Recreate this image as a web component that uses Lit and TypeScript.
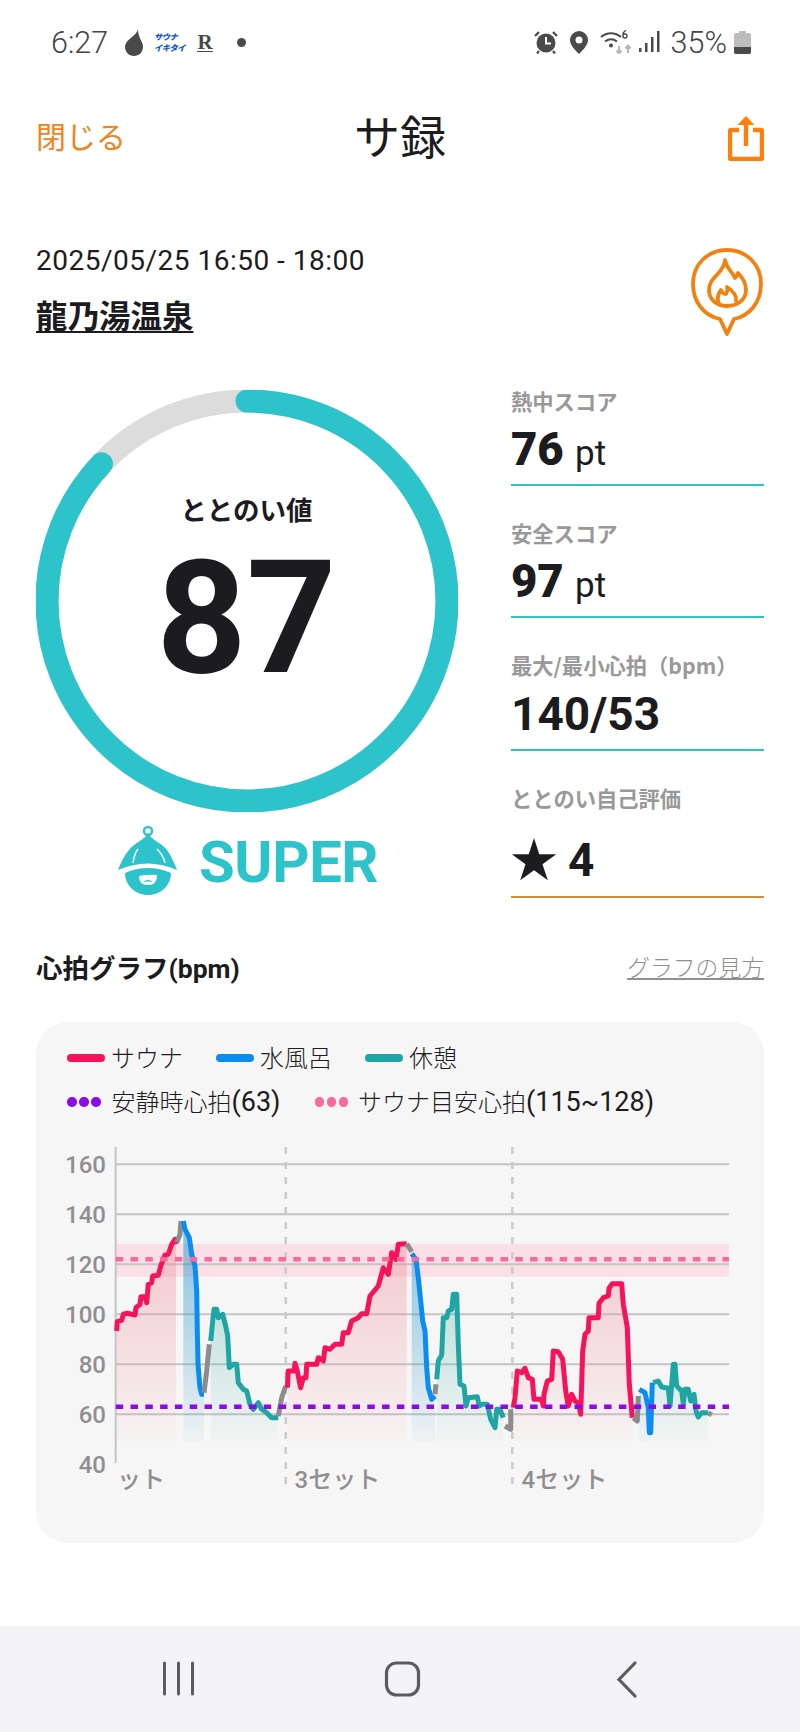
import { LitElement, html, css, svg } from "lit";
import { customElement } from "lit/decorators.js";

type P = [number, number];
const z5 = (a: P[]): P[] => a.map(([x, y]) => [40 + x / 3, 1130 + y / 3]);
const z6 = (a: P[]): P[] => a.map(([x, y]) => [400 + x / 3, 1130 + y / 3]);
const RED = "#f5135c", BLUE = "#0b8cf0", TEAL = "#1fa5a3", GRAY = "#8c8c8c";

const segs: { c: string; fill?: string; p: P[] }[] = [
  { c: RED, fill: "fr", p: z5([[230,600],[232,572],[245,568],[250,550],[262,547],[285,552],[288,530],[300,520],[303,497],[315,497],[320,515],[325,460],[335,455],[338,435],[355,433],[362,405],[375,372],[385,370],[395,340],[405,325],[408,340]]) },
  { c: GRAY, p: z5([[410,335],[420,310],[423,270]]) },
  { c: BLUE, fill: "fb", p: z5([[430,270],[435,295],[448,320],[455,370],[465,405],[470,480],[472,600],[474,700],[480,770],[485,790],[492,790]]) },
  { c: GRAY, p: z5([[492,785],[500,720],[508,640]]) },
  { c: TEAL, fill: "ft", p: z5([[512,630],[518,570],[522,535],[530,535],[535,560],[548,550],[558,590],[563,615],[568,710],[580,700],[590,700],[595,755],[610,775],[620,780],[630,820],[640,835],[655,815],[665,835],[680,845],[695,860],[715,860]]) },
  { c: GRAY, p: z5([[715,855],[725,800],[737,765]]) },
  { c: RED, fill: "fr", p: z5([[742,770],[745,720],[762,720],[765,697],[772,720],[782,770],[790,740],[798,740],[800,700],[830,700],[835,680],[850,690],[855,650],[870,655],[885,640],[905,640],[910,605],[925,605],[935,570],[955,560],[965,548],[980,548],[990,495],[1015,465],[1030,410],[1045,430],[1055,365],[1068,385],[1075,340],[1100,338]]) },
  { c: GRAY, p: z6([[20,338],[35,362]]) },
  { c: BLUE, fill: "fb", p: z6([[35,368],[48,385],[55,440],[62,510],[68,570],[75,600],[80,710],[85,770],[95,805],[105,795]]) },
  { c: GRAY, p: z6([[105,790],[108,760]]) },
  { c: TEAL, fill: "ft", p: z6([[110,745],[115,690],[125,672],[130,560],[140,560],[145,540],[155,535],[160,490],[170,490],[175,640],[180,760],[192,765],[198,825],[205,800],[232,797],[238,825],[245,820],[262,820],[272,865],[285,890],[290,835],[300,835],[310,860]]) },
  { c: GRAY, p: z6([[315,885],[332,895],[332,835]]) },
  { c: RED, fill: "fr", p: z6([[340,830],[345,800],[352,720],[365,725],[375,712],[385,740],[397,745],[402,805],[425,805],[430,825],[432,790],[442,750],[455,745],[460,660],[475,662],[488,685],[497,780],[505,825],[515,790],[525,810],[535,815],[542,850],[548,660],[555,610],[565,600],[567,560],[595,560],[597,517],[610,500],[625,495],[627,472],[637,458],[665,458],[670,520],[682,590],[688,760],[697,860]]) },
  { c: GRAY, p: z6([[700,860],[712,870],[715,795]]) },
  { c: BLUE, fill: "fb", p: z6([[718,775],[735,785],[745,830],[748,905],[752,905],[757,755]]) },
  { c: TEAL, fill: "ft", p: z6([[760,755],[775,750],[785,768],[805,772],[810,825],[820,700],[825,700],[830,765],[845,780],[850,820],[855,775],[865,775],[872,810],[882,790],[888,840],[895,858],[905,845],[925,845]]) },
  { c: GRAY, p: z6([[925,845],[935,852]]) },
];

const pts = (p: P[]) => p.map(([x, y]) => `${x.toFixed(1)},${y.toFixed(1)}`).join(" ");
const FILL_BOTTOM = 1440;
const yv = (v: number) => 1463.3 - (v - 40) * 2.5;

const stats = [
  { label: "熱中スコア", value: "76", unit: "pt" },
  { label: "安全スコア", value: "97", unit: "pt" },
  { label: "最大/最小心拍（bpm）", value: "140/53", unit: "" },
];

@customElement("app-root")
export class AppRoot extends LitElement {
  static styles = css`
    :host {
      display: block;
      width: 800px;
      height: 1732px;
      background: #fff;
      font-family: "Noto Sans CJK JP", Roboto, sans-serif;
      color: #1c1c20;
      overflow: hidden;
    }
    .page { display: flex; flex-direction: column; height: 1732px; }
    .status {
      height: 84px; display: flex; align-items: center; padding: 0 49px 0 51px; box-sizing: border-box;
      font-family: Roboto, sans-serif; color: #444; font-size: 30.5px; font-weight: 300; justify-content: space-between;
    }
    .status-side { display: flex; align-items: center; }
    .status svg { display: block; }
    .time { width: 73px; }
    .logo {
      width: 30px; margin-right: 13px; font: italic 800 8.2px/11px "Noto Sans CJK JP", sans-serif; color: #0d55c8;
      letter-spacing: -.4px; white-space: nowrap;
    }
    .rk {
      font: 700 21px/20px "Liberation Serif", serif; color: #4a4a4a; border-bottom: 1.5px solid #4a4a4a;
      width: 16px; text-align: center; margin-right: 24px; height: 19px;
    }
    .dot { width: 9px; height: 9px; border-radius: 50%; background: #4a4a4a; }
    .pct { margin: 0 7px 0 10px; }
    .header {
      height: 106px; display: grid; grid-template-columns: 1fr auto 1fr; align-items: center; padding: 0 36px; box-sizing: border-box;
    }
    .close { font-size: 30px; color: #ef8420; line-height: 1; padding-bottom: 4px; }
    .title { font-size: 46px; line-height: 1; color: #1c1c20; padding-bottom: 6px; }
    .share { justify-self: end; display: block; }
    .session { height: 200px; padding: 49px 36px 0; box-sizing: border-box; display: flex; justify-content: space-between; align-items: flex-start; }
    .date { font: 400 28px/44px Roboto, sans-serif; letter-spacing: .5px; color: #1c1c20; }
    .place { font-size: 31.5px; font-weight: 700; line-height: 46px; margin-top: 8px; text-decoration: underline; text-underline-offset: 3px; text-decoration-thickness: 2px; }
    .pin { display: block; margin: 9px 1px 0 0; }
    .main { display: grid; grid-template-columns: 421px 253px; column-gap: 54px; padding-left: 36px; height: 552px; }
    .gauge { position: relative; width: 421px; height: 422px; }
    .gauge svg { display: block; }
    .gauge-text { position: absolute; inset: 0; display: flex; flex-direction: column; align-items: center; }
    .gauge-label { font-size: 26.5px; font-weight: 700; line-height: 40px; margin-top: 99px; }
    .gauge-value { font: 700 157px/120px Roboto, sans-serif; color: #1c1c20; margin-top: 29px; }
    .rank { display: flex; align-items: flex-start; margin: 8px 0 0 74px; }
    .rank-text { font: 700 58px/80px Roboto, sans-serif; color: #2cc3cb; margin: 2px 0 0 9px; letter-spacing: -.4px; }
    .stat { height: 132.4px; box-sizing: border-box; border-bottom: 2px solid #2cc3cb; }
    .stat:first-child { height: 99px; }
    .stat-label { font-size: 21.3px; font-weight: 700; color: #999; line-height: 28px; white-space: nowrap; margin-top: -3px; }
    .stat-value { font: 900 45.500px/56px Roboto, sans-serif; color: #1c1c20; margin-top: 7px; white-space: nowrap; }
    .stat-value.plain { font-weight: 700; font-size: 46px; }
    .stat-unit { font: 400 35px/56px Roboto, sans-serif; }
    .stat.gap { padding-top: 36px; }
    .stat.self { border-bottom-color: #d08f35; height: 147px; }
    .self-value { display: flex; align-items: center; margin-top: 26px; height: 44px; }
    .star { font: 400 58px/44px "DejaVu Sans", sans-serif; margin: 0 8px 0 -3px; }
    .chart-head { display: flex; justify-content: space-between; align-items: center; height: 48px; padding: 0 36px; }
    .chart-title { font-size: 26.5px; font-weight: 700; }
    .chart-title span { font-family: Roboto, sans-serif; }
    .how { font-size: 22.8px; color: #8f8f8f; text-decoration: underline; font-weight: 300; }
    .card { margin: 32px 36px 0; background: #f7f6f6; border-radius: 32px; height: 521px; padding-top: 14px; box-sizing: border-box; }
    .legend-row { height: 44px; display: flex; align-items: center; padding-left: 31px; font-size: 24px; font-weight: 300; white-space: nowrap; }
    .legend-item { display: flex; align-items: center; }
    .legend-text { margin-bottom: 4px; }
    .swatch { width: 38px; height: 8px; border-radius: 4px; margin-right: 6px; }
    .dots { display: flex; gap: 2.5px; margin-right: 11px; }
    .dots.wide { margin-right: 10px; }
    .dots i { width: 9.5px; height: 9.5px; border-radius: 50%; display: block; }
    .legend-num { font-family: Roboto, sans-serif; font-weight: 400; font-size: 27px; }
    .chart { display: block; margin-top: 2px; }
    .chart text { font-family: Roboto, "Noto Sans CJK JP", sans-serif; font-weight: 500; font-size: 24px; fill: #8f8f8f; }
    .nav { margin-top: auto; height: 106px; background: #f4f4f6; display: block; }
  `;

  private legend() {
    const c1 = [[RED, "サウナ", 33], [BLUE, "水風呂", 33], [TEAL, "休憩", 0]] as const;
    return html`
      <div class="legend-row">
        ${c1.map(([c, t, m]) => html`<div class="legend-item" style="margin-right:${m}px">
          <div class="swatch" style="background:${c}"></div><span class="legend-text">${t}</span></div>`)}
      </div>
      <div class="legend-row">
        <div class="legend-item" style="margin-right:34px">
          <div class="dots">${[0, 1, 2].map(() => html`<i style="background:#8a0be8"></i>`)}</div>
          <span class="legend-text">安静時心拍<span class="legend-num">(63)</span></span>
        </div>
        <div class="legend-item">
          <div class="dots wide">${[0, 1, 2].map(() => html`<i style="background:#f8699c"></i>`)}</div>
          <span class="legend-text">サウナ目安心拍<span class="legend-num">(115~128)</span></span>
        </div>
      </div>`;
  }

  private chart() {
    const labels = [160, 140, 120, 100, 80, 60, 40];
    return html`<svg class="chart" width="728" height="417" viewBox="36 1125 728 417">
      <defs>
        <linearGradient id="fr" gradientUnits="userSpaceOnUse" x1="0" y1="1240" x2="0" y2="${FILL_BOTTOM}">
          <stop offset="0" stop-color="#ee8f99" stop-opacity=".44"/><stop offset="1" stop-color="#ee8f99" stop-opacity=".04"/>
        </linearGradient>
        <linearGradient id="fb" gradientUnits="userSpaceOnUse" x1="0" y1="1240" x2="0" y2="${FILL_BOTTOM}">
          <stop offset="0" stop-color="#1f93c8" stop-opacity=".5"/><stop offset="1" stop-color="#1f93c8" stop-opacity=".04"/>
        </linearGradient>
        <linearGradient id="ft" gradientUnits="userSpaceOnUse" x1="0" y1="1240" x2="0" y2="${FILL_BOTTOM}">
          <stop offset="0" stop-color="#27a898" stop-opacity=".36"/><stop offset="1" stop-color="#27a898" stop-opacity=".03"/>
        </linearGradient>
      </defs>
      <rect x="115.7" y="1243" width="613.3" height="32.7" fill="#fadfe6"/>
      ${[160, 140, 120, 100, 80, 60].map((v) => svg`<line x1="115.7" x2="729" y1="${yv(v)}" y2="${yv(v)}" stroke="#c4c4c4" stroke-width="2"/>`)}
      <line x1="115.7" x2="115.7" y1="1146" y2="1462" stroke="#c4c4c4" stroke-width="2"/>
      ${[285.7, 512.3].map((x) => svg`<line x1="${x}" x2="${x}" y1="1146" y2="1490" stroke="#c9c9c9" stroke-width="2.4" stroke-dasharray="7 8"/>`)}
      ${labels.map((v) => svg`<text x="106" y="${yv(v) + 8.5}" text-anchor="end">${v}</text>`)}
      ${segs.filter((s) => s.fill).map((s) => svg`<polygon points="${pts(s.p)} ${s.p[s.p.length - 1][0].toFixed(1)},${FILL_BOTTOM} ${s.p[0][0].toFixed(1)},${FILL_BOTTOM}" fill="url(#${s.fill})"/>`)}
      ${segs.map((s) => svg`<polyline points="${pts(s.p)}" fill="none" stroke="${s.c}" stroke-width="5" stroke-linejoin="round"/>`)}
      <line x1="115.7" x2="729" y1="1258.3" y2="1258.3" stroke="#f8699c" stroke-width="4.6" stroke-dasharray="7.5 7.3"/>
      <line x1="115.7" x2="729" y1="1405.7" y2="1405.7" stroke="#8a0be8" stroke-width="4.6" stroke-dasharray="7.5 7.3"/>
      <text x="117" y="1487">ット</text>
      <text x="294.5" y="1487">3セット</text>
      <text x="521.5" y="1487">4セット</text>
    </svg>`;
  }

  render() {
    const r = 200, circ = 2 * Math.PI * r;
    return html`<div class="page">
      <div class="status">
        <div class="status-side">
          <span class="time">6:27</span>
          <svg width="20" height="27" viewBox="0 0 20 27" style="margin-right:10px"><path d="M14 0C13 7 1 10 1 18c0 5 4 9 9 9s9-4 9-9c0-6-5-9-5-18z" fill="#4a4a4a"/></svg>
          <div class="logo">サウナ<br>イキタイ</div>
          <div class="rk">R</div>
          <div class="dot"></div>
        </div>
        <div class="status-side">
          <svg width="24" height="24" viewBox="0 0 24 24" style="margin-right:11px"><circle cx="12" cy="13" r="9.5" fill="#4a4a4a"/><path d="M12 7v6.5h5" fill="none" stroke="#fff" stroke-width="2"/><path d="M1 6l4-4M23 6l-4-4M5 21l-2 2.5M19 21l2 2.5" stroke="#4a4a4a" stroke-width="2.2"/></svg>
          <svg width="20" height="23" viewBox="0 0 20 23" style="margin-right:11px"><path fill-rule="evenodd" d="M10 0a9 9 0 0 1 9 9c0 5-5 10-9 14C6 19 1 14 1 9a9 9 0 0 1 9-9zm0 5.5a3.5 3.5 0 1 0 0 7 3.5 3.5 0 0 0 0-7z" fill="#4a4a4a"/></svg>
          <svg width="33" height="24" viewBox="0 0 33 24" style="margin-right:6px"><g fill="none" stroke="#4a4a4a" stroke-width="2"><path d="M1 7c6-5 14-5 20 0"/><path d="M5 11.500c4-3 8-3 12 0"/></g><circle cx="11" cy="15.500" r="2" fill="#4a4a4a"/><path d="M23 8V3l3-3M27 6a2 2 0 1 1-4 0 2 2 0 0 1 4 0z" fill="none" stroke="#4a4a4a" stroke-width="1.300"/><path d="M19 16v7M16.500 20.500l2.500 3 2.500-3M28 23v-7M25.500 18.500l2.500-3 2.500 3" fill="none" stroke="#b5b5b5" stroke-width="2"/></svg>
          <svg width="22" height="22" viewBox="0 0 22 22"><g fill="#4a4a4a"><rect x="0" y="17" width="2.500" height="4"/><rect x="6" y="12" width="2.500" height="9"/><rect x="12" y="6" width="2.500" height="15"/><rect x="18" y="0" width="2.500" height="21"/></g></svg>
          <span class="pct">35%</span>
          <svg width="17" height="23" viewBox="0 0 17 23"><path d="M5 0h7v2h3a2 2 0 0 1 2 2v17a2 2 0 0 1-2 2H2a2 2 0 0 1-2-2V4a2 2 0 0 1 2-2h3z" fill="#bdbdbd"/><path d="M0 16h17v5a2 2 0 0 1-2 2H2a2 2 0 0 1-2-2z" fill="#4a4a4a"/></svg>
        </div>
      </div>

      <div class="header">
        <div class="close">閉じる</div>
        <div class="title">サ録</div>
        <svg class="share" width="36" height="48" viewBox="0 0 36 48" fill="none" stroke="#ff7f0a"><path d="M11 17H3a1 1 0 0 0-1 1v27a1 1 0 0 0 1 1h30a1 1 0 0 0 1-1V18a1 1 0 0 0-1-1h-8" stroke-width="4.400" stroke-linejoin="round"/><path d="M18 33V5" stroke-width="4.400"/><path d="M9.500 12L18 3l8.500 9z" fill="#ff7f0a" stroke="none"/></svg>
      </div>

      <div class="session">
        <div>
          <div class="date">2025/05/25 16:50 - 18:00</div>
          <div class="place">龍乃湯温泉</div>
        </div>
        <svg class="pin" width="72" height="88" viewBox="0 0 72 88" fill="none" stroke="#f2820f" stroke-width="3.800" stroke-linejoin="round" stroke-linecap="round"><path d="M29 71C14 68 2 55 2 36 2 16 17 2 36 2s34 14 34 34c0 19-12 32-27 35l-7 15z"/><path d="M34 12C36 22 42 24 44 30C46 28 47 26 47 25C52 30 55 36 55 42C55 52 46 58 36 58C26 58 18 52 18 42C18 32 26 28 30 22C32 19 34 16 34 12Z"/><path d="M28 56C25 50 27 46 30 42C31 45 33 46 35 46C36 44 37 41 36 39C42 43 46 48 45 53"/></svg>
      </div>

      <div class="main">
        <div>
          <div class="gauge">
            <svg width="422" height="422" viewBox="0 0 422 422">
              <circle cx="211" cy="211" r="${r}" fill="none" stroke="#dcdcdc" stroke-width="23"/>
              <circle cx="211" cy="211" r="${r}" fill="none" stroke="#2cc3cb" stroke-width="23" stroke-linecap="round"
                stroke-dasharray="${circ * 0.87} ${circ}" transform="rotate(-90 211 211)"/>
            </svg>
            <div class="gauge-text">
              <div class="gauge-label">ととのい値</div>
              <div class="gauge-value">87</div>
            </div>
          </div>
          <div class="rank">
            <svg width="80" height="80" viewBox="0 0 80 80" fill="#2cc3cb">
              <circle cx="38" cy="11" r="4" fill="none" stroke="#2cc3cb" stroke-width="2.500"/>
              <path d="M38 13C35 20 25 22 19 30C14 36 11 42 8 50Q38 37 67 50C64 42 61 36 57 30C51 22 41 20 38 13Z"/>
              <path d="M15 53Q38 43 61 53C61 66 50 75 38 75C26 75 15 66 15 53Z"/>
              <path d="M29 56Q38 54 47 55C47 62 44 65 38 65C32 65 29 62 29 56Z" fill="#fff"/>
              <path d="M33 62q5-4 10 0q-5-1-10 0z"/>
              <path d="M28 29C24 34 24 38 23 43M47 29C52 34 54 38 55 43" fill="none" stroke="#fff" stroke-width="1.500"/>
            </svg>
            <div class="rank-text">SUPER</div>
          </div>
        </div>
        <div>
          ${stats.map((s, i) => html`<div class="stat ${i ? "gap" : ""}">
            <div class="stat-label">${s.label}</div>
            <div class="stat-value ${s.unit ? "" : "plain"}">${s.value}${s.unit ? html` <span class="stat-unit">${s.unit}</span>` : ""}</div>
          </div>`)}
          <div class="stat gap self">
            <div class="stat-label">ととのい自己評価</div>
            <div class="stat-value plain self-value"><span class="star">★</span><span>4</span></div>
          </div>
        </div>
      </div>

      <div class="chart-head">
        <div class="chart-title">心拍グラフ<span>(bpm)</span></div>
        <div class="how">グラフの見方</div>
      </div>
      <div class="card">
        ${this.legend()}
        ${this.chart()}
      </div>

      <svg class="nav" width="800" height="106" viewBox="0 1626 800 106" fill="none" stroke="#5c5c5e" stroke-width="3" stroke-linecap="round">
        <path d="M164.500 1663v31M178.500 1663v31M192.500 1663v31"/>
        <rect x="386.500" y="1663" width="32" height="32" rx="10" stroke-width="3.200"/>
        <path d="M635 1663l-16 16.500 16 16.500" stroke-width="3.200"/>
      </svg>
    </div>`;
  }
}
